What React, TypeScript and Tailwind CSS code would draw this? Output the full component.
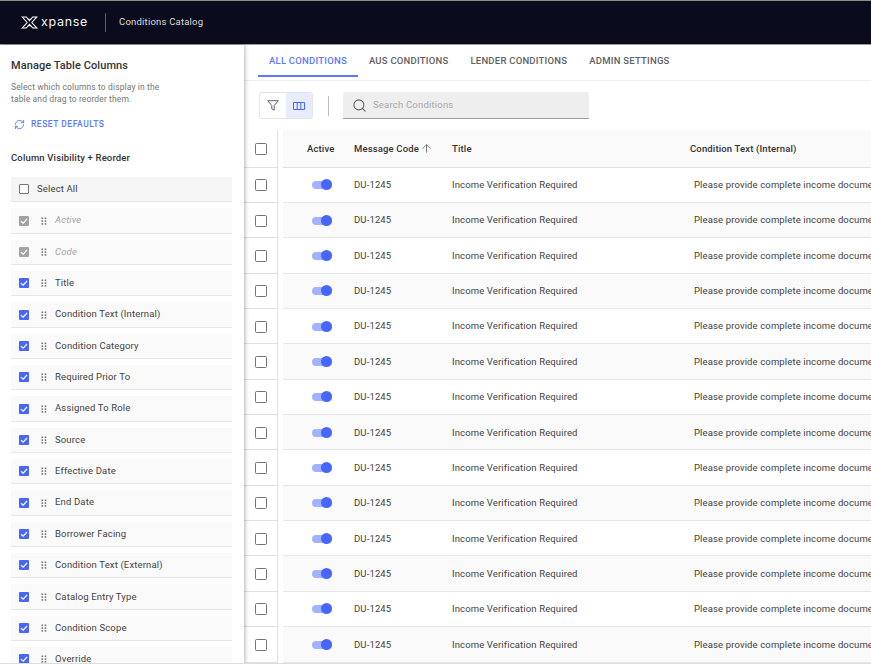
import { ArrowUp, RefreshCw, Search } from "lucide-react";

const sideColumns = [
  "Title",
  "Condition Text (Internal)",
  "Condition Category",
  "Required Prior To",
  "Assigned To Role",
  "Source",
  "Effective Date",
  "End Date",
  "Borrower Facing",
  "Condition Text (External)",
  "Catalog Entry Type",
  "Condition Scope",
  "Override",
];

const tabs = ["ALL CONDITIONS", "AUS CONDITIONS", "LENDER CONDITIONS", "ADMIN SETTINGS"];

const rows = Array.from({ length: 14 }, (_, i) => i);

function Box() {
  return <span className="block w-[12px] h-[12px] rounded-[1.5px] border-[1.5px] border-[#757575] bg-white shrink-0" />;
}

function CheckedBox({ disabled }: { disabled?: boolean }) {
  return (
    <span className={`flex items-center justify-center w-[10px] h-[10px] rounded-[1px] shrink-0 ${disabled ? "bg-[#a3a3a3]" : "bg-[#4766ff]"}`}>
      <svg viewBox="0 0 10 10" className="w-[10px] h-[10px]" fill="none" stroke="white" strokeWidth="1.2">
        <path d="M2 5.2 L4.2 7.2 L8 3" />
      </svg>
    </span>
  );
}

function Grip() {
  return (
    <svg viewBox="0 0 6 8" className="w-[6px] h-[8px] shrink-0" fill="#757575">
      <rect x="0.5" y="0.5" width="1.6" height="1.6" />
      <rect x="3.7" y="0.5" width="1.6" height="1.6" />
      <rect x="0.5" y="3.3" width="1.6" height="1.6" />
      <rect x="3.7" y="3.3" width="1.6" height="1.6" />
      <rect x="0.5" y="6.1" width="1.6" height="1.6" />
      <rect x="3.7" y="6.1" width="1.6" height="1.6" />
    </svg>
  );
}

function SideRow({ label, disabled }: { label: string; disabled?: boolean }) {
  return (
    <div className="flex items-center h-[25.35px] pl-[8px] bg-[#fafafa] border-b border-[#e6e6e6] shrink-0">
      <CheckedBox disabled={disabled} />
      <span className="ml-[12px]"><Grip /></span>
      <span className={`ml-[8px] text-[9.5px] tracking-[0.15px] ${disabled ? "italic text-[#a3a3a3]" : "text-[#424242]"}`}>{label}</span>
    </div>
  );
}

function Toggle() {
  return (
    <span className="relative block w-[20px] h-[8px] rounded-full bg-[#a3b2ff]">
      <span className="absolute right-0 top-[-2px] w-[11px] h-[11px] rounded-full bg-[#4766ff]" />
    </span>
  );
}

function Logo() {
  return (
    <svg viewBox="0 0 18 14" className="w-[17px] h-[13px]" fill="none" stroke="white" strokeWidth="1.1">
      <path d="M1 1 H5.5 L9 5 L12.5 1 H17 L11.5 7 L17 13 H12.5 L9 9 L5.5 13 H1 L6.5 7 Z" />
      <path d="M7 3.5 L11 3.5 M7 10.5 L11 10.5" strokeWidth="0.8" />
    </svg>
  );
}

export default function App() {
  return (
    <div className="w-[871px] h-[664px] overflow-hidden flex flex-col bg-white border-b border-[#dddddd] font-['Roboto',sans-serif]">
      <header className="h-[45px] shrink-0 flex items-center pl-[21px] bg-[#0a0c1e] border-t border-b border-t-[#8a8a8a] border-b-[#9a9a9a]">
        <Logo />
        <span className="ml-[3px] text-[#f5f5f5] text-[12.5px] font-['Inter',sans-serif] tracking-[0.7px] leading-none">xpanse</span>
        <span className="ml-[17px] w-px h-[19px] bg-[#3f51d5]" />
        <span className="ml-[13px] text-[#dcdcdc] text-[9.5px] tracking-[0.2px]">Conditions Catalog</span>
      </header>

      <div className="flex flex-1 min-h-0">
        <aside className="w-[244px] shrink-0 overflow-hidden pl-[11px] pr-[12px] shadow-[1px_0_4px_rgba(0,0,0,0.3)] z-10 bg-white">
          <h2 className="mt-[13px] text-[11px] leading-[15px] font-medium tracking-[0.08px] text-[#333333]">Manage Table Columns</h2>
          <p className="mt-[8px] w-[160px] text-[8.5px] leading-[12px] tracking-[0.12px] text-[#757575]">
            Select which columns to display in the table and drag to reorder them.
          </p>
          <div className="mt-[12px] flex items-center pl-[3px] h-[14px] text-[#5c78ff]">
            <RefreshCw size={11} strokeWidth={2} />
            <span className="ml-[6px] text-[8.5px] font-medium tracking-[0.5px]">RESET DEFAULTS</span>
          </div>
          <h3 className="mt-[20px] text-[9.5px] leading-[14px] font-medium tracking-[0.15px] text-[#333333]">Column Visibility + Reorder</h3>
          <div className="mt-[12px] flex flex-col gap-[6px]">
            <div className="flex items-center h-[25.35px] pl-[8px] bg-[#f5f5f5] border-b border-[#e6e6e6] shrink-0">
              <span className="block w-[10px] h-[10px] rounded-[1px] border-[1.5px] border-[#757575] bg-white" />
              <span className="ml-[8px] text-[9.5px] tracking-[0.15px] text-[#424242]">Select All</span>
            </div>
            <SideRow label="Active" disabled />
            <SideRow label="Code" disabled />
            {sideColumns.map((c) => (
              <SideRow key={c} label={c} />
            ))}
          </div>
        </aside>

        <main className="flex-1 min-w-0 overflow-hidden">
          <nav className="flex h-[36px] pl-[14px] border-b border-[#eeeeee]">
            {tabs.map((t, i) => (
              <div
                key={t}
                className={`h-[32px] flex items-center px-[11px] pt-[3px] text-[9.5px] font-medium tracking-[0.23px] border-b-2 ${
                  i === 0 ? "text-[#5c78ff] border-[#5c78ff]" : "text-[#616161] border-transparent"
                }`}
              >
                {t}
              </div>
            ))}
          </nav>

          <div className="flex items-center h-[49px] pl-[15px]">
            <div className="flex h-[27px] w-[54px] rounded-[3px] border border-[#e4e4e4]">
              <span className="flex-1 flex items-center justify-center text-[#616161]">
                <svg viewBox="0 0 12 11" className="w-[12px] h-[11px]" fill="none" stroke="currentColor" strokeWidth="1">
                  <path d="M0.7 0.7 H11.3 L7.2 5.6 V10.2 L4.8 8.9 V5.6 Z" />
                </svg>
              </span>
              <span className="flex-1 flex items-center justify-center bg-[#e8ecff] text-[#4766ff]">
                <svg viewBox="0 0 12 8" className="w-[12px] h-[8px]" fill="none" stroke="currentColor" strokeWidth="1">
                  <path d="M0.5 0.5 H11.5 V7.5 H0.5 Z M4.2 0.5 V7.5 M7.8 0.5 V7.5" />
                </svg>
              </span>
            </div>
            <span className="ml-[15px] w-px h-[20px] bg-[#bdbdbd]" />
            <div className="ml-[14px] w-[246px] h-[27px] flex items-center pl-[9px] bg-[#eeeeee] border-b border-[#9e9e9e] rounded-t-[2px]">
              <Search size={15} strokeWidth={1.7} className="text-[#616161]" />
              <span className="ml-[6px] text-[9.5px] tracking-[0.2px] text-[#a8a8a8]">Search Conditions</span>
            </div>
          </div>

          <div className="flex h-[37.5px] items-center text-[9.5px] font-medium tracking-[0.15px] text-[#333333]">
            <div className="w-[34px] h-full flex items-center justify-center pt-[1px] border-r border-b border-[#e0e0e0]"><Box /></div>
            <div className="flex-1 min-w-0 flex h-full items-center pt-[1px] ml-[5px] bg-[#fafafa] border-b border-[#e0e0e0] overflow-hidden">
              <div className="w-[71px] pl-[24px] shrink-0">Active</div>
              <div className="w-[98px] flex items-center shrink-0 whitespace-nowrap">
                Message Code
                <ArrowUp size={13} strokeWidth={1.4} className="ml-[1px] text-[#616161]" />
              </div>
              <div className="w-[238px] shrink-0">Title</div>
              <div className="whitespace-nowrap">Condition Text (Internal)</div>
            </div>
          </div>

          {rows.map((r) => (
            <div key={r} className="flex h-[35.36px] items-center text-[9.5px] tracking-[0.13px] text-[#424242]">
              <div className="w-[34px] h-full flex items-center justify-center pt-[1px] border-r border-b border-[#e0e0e0]"><Box /></div>
              <div className={`flex-1 min-w-0 flex h-full items-center pt-[1px] ml-[5px] border-b border-[#e6e6e6] overflow-hidden ${r % 2 === 1 ? "bg-[#fafafa]" : "bg-white"}`}>
                <div className="w-[71px] pl-[29px] shrink-0"><Toggle /></div>
                <div className="w-[98px] shrink-0">DU-1245</div>
                <div className="w-[242px] shrink-0">Income Verification Required</div>
                <div className="whitespace-nowrap">Please provide complete income documentation for all borrowers</div>
              </div>
            </div>
          ))}
        </main>
      </div>
    </div>
  );
}
